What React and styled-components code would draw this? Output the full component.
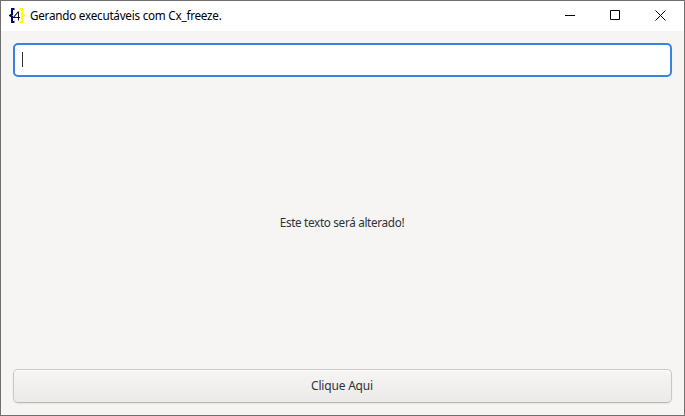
import React from "react";
import styled, { createGlobalStyle } from "styled-components";

const GlobalStyle = createGlobalStyle`
  * { box-sizing: border-box; }
  body { margin: 0; overflow: hidden; }
`;

const Window = styled.div`
  width: 685px;
  height: 416px;
  display: flex;
  flex-direction: column;
  border: 1px solid #707070;
  background: #f6f5f4;
  font-family: "Noto Sans", "Open Sans", sans-serif;
`;

const TitleBar = styled.header`
  height: 30px;
  display: flex;
  align-items: center;
  background: #fff;
  padding: 0 1px 0 8px;
`;

const AppIcon = styled.svg`
  width: 16px;
  height: 16px;
  margin-top: -1px;
`;

const Title = styled.h1`
  flex: 1;
  margin: 0 0 0 5px;
  padding-bottom: 2px;
  font-size: 11.7px;
  font-weight: 400;
  line-height: 16px;
  letter-spacing: -0.24px;
  color: #000;
`;

const WindowButton = styled.button`
  width: 45px;
  height: 30px;
  display: flex;
  align-items: flex-start;
  justify-content: center;
  padding: 9px 0 0;
  border: 0;
  background: none;
`;

const Content = styled.main`
  flex: 1;
  display: flex;
  flex-direction: column;
  padding: 12px;
`;

const Entry = styled.div`
  height: 34px;
  display: flex;
  align-items: flex-start;
  padding: 7px 0 0 7px;
  border: 2px solid #3584e4;
  border-radius: 5px;
  background: #fff;
`;

const Caret = styled.span`
  width: 1px;
  height: 15px;
  background: #2e3436;
`;

const Message = styled.p`
  flex: 1;
  display: flex;
  align-items: center;
  justify-content: center;
  margin: 0;
  padding: 0 1px 3px 0;
  font-size: 11.7px;
  letter-spacing: -0.31px;
  color: #2e3436;
`;

const ActionButton = styled.button`
  height: 34px;
  padding: 0 1px 2px 0;
  border: 1px solid #cdc7c2;
  border-bottom-color: #bfb8b1;
  border-radius: 5px;
  background: linear-gradient(to top, #edebe9 2px, #f6f5f4);
  box-shadow: inset 0 1px #fff, 0 1px 2px rgba(0, 0, 0, 0.07);
  font: 12px "Noto Sans", "Open Sans", sans-serif;
  letter-spacing: -0.2px;
  color: #2e3436;
`;

const Glyph = ({ children }) => (
  <svg width="11" height="11" viewBox="0 0 11 11" fill="none" stroke="#000">{children}</svg>
);

export default function App() {
  return (
    <Window>
      <GlobalStyle />
      <TitleBar>
        <AppIcon viewBox="0 0 16 16" fill="none">
          <path d="M5.500 1H3v5.500L1 7.500 3 8.500V14h2.500" stroke="#000080" strokeWidth="2" />
          <path d="M10.500 1H13v5.500l2 1-2 1V14h-2.500" stroke="#ffff00" strokeWidth="2" />
          <path d="M9.500 12.500V4H9L4.500 9.500H11" stroke="#111" strokeWidth="1.1" />
        </AppIcon>
        <Title>Gerando executáveis com Cx_freeze.</Title>
        <WindowButton aria-label="Minimize"><Glyph><path d="M0 5.500h10" /></Glyph></WindowButton>
        <WindowButton aria-label="Maximize"><Glyph><path d="M.5.5h9v9h-9z" /></Glyph></WindowButton>
        <WindowButton aria-label="Close"><Glyph><path d="m.5.5 10 10m0-10-10 10" /></Glyph></WindowButton>
      </TitleBar>
      <Content>
        <Entry><Caret /></Entry>
        <Message>Este texto será alterado!</Message>
        <ActionButton>Clique Aqui</ActionButton>
      </Content>
    </Window>
  );
}
